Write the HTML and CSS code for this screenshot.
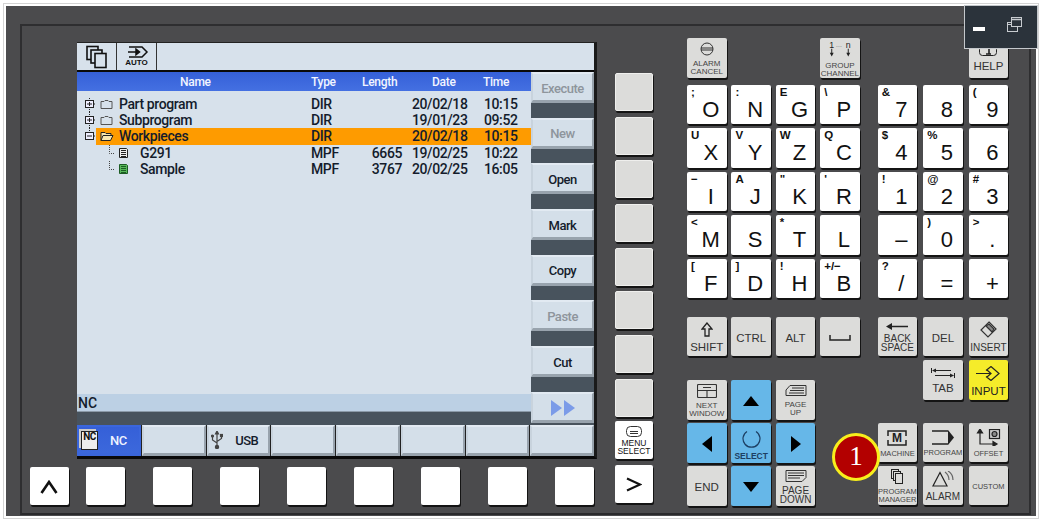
FILE: index.html
```html
<!DOCTYPE html>
<html lang="en">
<head>
    <meta charset="UTF-8">
    <title>Operator panel</title>
    <link rel="stylesheet" href="styles.css">
</head>
<body>
<div class="device">
<div class="bezel">
<div class="inner">

    <!-- Screen and the keys under it -->
    <div class="left-col">
        <div class="screen">
            <div class="top-bar">
                <div class="top-tab">
                    <svg width="24" height="24" viewBox="0 0 24 24" fill="#d7e1eb" stroke="#111" stroke-width="1.6"><rect x="2" y="1.5" width="11" height="13"/><rect x="6" y="5" width="11" height="13"/><rect x="10" y="8.5" width="11" height="14"/></svg>
                </div>
                <div class="top-tab auto-tab">
                    <svg width="24" height="12" viewBox="0 0 24 12" fill="none" stroke="#111" stroke-width="1.5"><path d="M4 1h13l5 5-5 5H4M3 6h11"/><path d="M11 3.2L14.5 6 11 8.800z" fill="#111"/></svg>
                    <span>AUTO</span>
                </div>
            </div>
            <div class="workarea">
                <div class="browser">
                    <div class="list-head">
                        <span class="col-name head-name">Name</span>
                        <span class="col-type">Type</span>
                        <span class="head-length">Length</span>
                        <span class="head-date">Date</span>
                        <span class="head-time">Time</span>
                    </div>
                    <div class="list">
                        <div class="row">
                            <svg class="tree" width="19" height="16" viewBox="0 0 19 16" fill="none" stroke="#222"><path d="M12.500 2v3M12.500 11v5M17 8h2" stroke-dasharray="1 1"/><rect x="8.500" y="4.500" width="8" height="7" fill="#eef"/><path d="M10 8h5M12.500 6v4"/></svg>
                            <div class="cells">
                                <span class="col-name"><svg class="folder" width="13" height="11" viewBox="0 0 13 11" fill="#d7e1eb" stroke="#555"><path d="M1 2.500h3l1-1h3l1 1h3v7H1z"/></svg>Part program</span>
                                <span class="col-type">DIR</span><span class="col-length"></span>
                                <span class="col-date">20/02/18</span><span class="col-time">10:15</span>
                            </div>
                        </div>
                        <div class="row">
                            <svg class="tree" width="19" height="16" viewBox="0 0 19 16" fill="none" stroke="#222"><path d="M12.500 0v5M12.500 11v5M17 8h2" stroke-dasharray="1 1"/><rect x="8.500" y="4.500" width="8" height="7" fill="#eef"/><path d="M10 8h5M12.500 6v4"/></svg>
                            <div class="cells">
                                <span class="col-name"><svg class="folder" width="13" height="11" viewBox="0 0 13 11" fill="#d7e1eb" stroke="#555"><path d="M1 2.500h3l1-1h3l1 1h3v7H1z"/></svg>Subprogram</span>
                                <span class="col-type">DIR</span><span class="col-length"></span>
                                <span class="col-date">19/01/23</span><span class="col-time">09:52</span>
                            </div>
                        </div>
                        <div class="row">
                            <svg class="tree" width="19" height="16" viewBox="0 0 19 16" fill="none" stroke="#222"><path d="M12.500 0v5M17 8h2" stroke-dasharray="1 1"/><rect x="8.500" y="4.500" width="8" height="7" fill="#eef"/><path d="M10 8h5"/></svg>
                            <div class="cells selected">
                                <span class="col-name"><svg class="folder open" width="14" height="11" viewBox="0 0 14 11" fill="#f7e7b0" stroke="#222"><path d="M1 9.500v-8h4l1 1h5v2"/><path d="M1 9.500l2-5h10l-2.500 5z"/></svg>Workpieces</span>
                                <span class="col-type">DIR</span><span class="col-length"></span>
                                <span class="col-date">20/02/18</span><span class="col-time">10:15</span>
                            </div>
                        </div>
                        <div class="row">
                            <svg class="tree" width="19" height="16" viewBox="0 0 19 16"></svg>
                            <div class="cells">
                                <span class="col-name sub-item"><svg class="doc" width="22" height="16" viewBox="0 0 22 16" fill="none" stroke="#222"><path d="M0.500 0v8.500H5" stroke="#444" stroke-dasharray="1 1"/><path d="M10.500 3.500h7l1 1v8h-8z" fill="#eee"/><path d="M12 5.500h5M12 7.500h5M12 9.500h5M12 11.500h5"/></svg>G291</span>
                                <span class="col-type">MPF</span><span class="col-length">6665</span>
                                <span class="col-date">19/02/25</span><span class="col-time">10:22</span>
                            </div>
                        </div>
                        <div class="row">
                            <svg class="tree" width="19" height="16" viewBox="0 0 19 16"></svg>
                            <div class="cells">
                                <span class="col-name sub-item"><svg class="doc" width="22" height="16" viewBox="0 0 22 16" fill="none" stroke="#1c5c24"><path d="M0.500 0v8.500H5" stroke="#444" stroke-dasharray="1 1"/><path d="M10.500 3.500h7l1 1v8h-8z" fill="#58b85a"/><path d="M12 5.500h5M12 7.500h5M12 9.500h5M12 11.500h5"/></svg>Sample</span>
                                <span class="col-type">MPF</span><span class="col-length">3767</span>
                                <span class="col-date">20/02/25</span><span class="col-time">16:05</span>
                            </div>
                        </div>
                    </div>
                    <div class="status">NC</div>
                    <div class="status-gap"></div>
                </div>
                <div class="softkeys">
                    <div class="softkey off">Execute</div>
                    <div class="softkey off">New</div>
                    <div class="softkey">Open</div>
                    <div class="softkey">Mark</div>
                    <div class="softkey">Copy</div>
                    <div class="softkey off">Paste</div>
                    <div class="softkey">Cut</div>
                    <div class="softkey"><svg width="26" height="16" viewBox="0 0 26 16" fill="#7b9be8"><path d="M1 0l11 8-11 8zM14 0l11 8-11 8z"/></svg></div>
                </div>
            </div>
            <div class="h-softkeys">
                <div class="softkey h-key active">
                    <span class="nc-icon">NC</span>
                    <span class="h-label">NC</span>
                </div>
                <div class="softkey h-key"></div>
                <div class="softkey h-key usb-key">
                    <svg width="12" height="18" viewBox="0 0 12 18" fill="none" stroke="#444" stroke-width="1.200"><path d="M6 1v16M1.500 6v3l4.500 3M10.500 5v2.500L6 10.500"/><path d="M6 0L4.500 3h3z" fill="#444"/><circle cx="6" cy="16" r="1.600" fill="#444"/><rect x="9.500" y="3.500" width="2" height="2" fill="#444"/><circle cx="1.500" cy="5" r="1" fill="#444"/></svg>
                    <span class="h-label">USB</span>
                </div>
                <div class="softkey h-key"></div>
                <div class="softkey h-key"></div>
                <div class="softkey h-key"></div>
                <div class="softkey h-key"></div>
                <div class="softkey h-key"></div>
            </div>
        </div>
        <div class="bottom-keys">
            <div class="key white-key fn-key">
                <svg width="18" height="14" viewBox="0 0 18 14" fill="none" stroke="#111" stroke-width="2.600"><path d="M1.500 13L9 2l7.500 11"/></svg>
            </div>
            <div class="key white-key"></div>
            <div class="key white-key"></div>
            <div class="key white-key"></div>
            <div class="key white-key"></div>
            <div class="key white-key"></div>
            <div class="key white-key"></div>
            <div class="key white-key"></div>
            <div class="key white-key"></div>
        </div>
    </div>

    <!-- Vertical keys next to the screen -->
    <div class="side-col">
        <div class="side-stack">
            <div class="key gray-key"></div>
            <div class="key gray-key"></div>
            <div class="key gray-key"></div>
            <div class="key gray-key"></div>
            <div class="key gray-key"></div>
            <div class="key gray-key"></div>
            <div class="key gray-key"></div>
            <div class="key gray-key"></div>
        </div>
        <div class="key white-key fn-key menu-key">
            <svg width="16" height="11" viewBox="0 0 16 11" fill="none" stroke="#333"><rect x="0.500" y="0.500" width="15" height="10" rx="4"/><path d="M4 5.500h8M4 7.500h8"/></svg>
            <span class="tiny menu-label">MENU<br>SELECT</span>
        </div>
        <div class="key white-key fn-key more-key">
            <svg width="16" height="15" viewBox="0 0 16 15" fill="none" stroke="#111" stroke-width="2.200"><path d="M1 1.500l13 6-13 6"/></svg>
        </div>
    </div>

    <!-- Letter keys and cursor block -->
    <div class="alpha-col">
        <div class="key-grid four">
            <div class="key light-key fn-key">
                <svg width="14" height="14" viewBox="0 0 14 14" fill="none" stroke="#333"><circle cx="7" cy="7" r="6"/><path d="M1 6h12M1 8h12"/></svg>
                <span class="tiny">ALARM<br>CANCEL</span>
            </div>
            <div></div><div></div>
            <div class="key light-key fn-key">
                <svg width="24" height="18" viewBox="0 0 24 18" fill="#222" font-family="Liberation Sans" font-size="9"><text x="1" y="8">1</text><text x="8" y="7" fill="#777" font-size="7">...</text><text x="18" y="8">n</text><path d="M3.500 9v5M20.500 9v5" stroke="#222"/><path d="M1.500 13h4l-2 4zM18.500 13h4l-2 4z"/></svg>
                <span class="tiny">GROUP<br>CHANNEL</span>
            </div>
        </div>
        <div class="key-grid four letters">
            <div class="key white-key"><span class="sub">;</span><span class="cap">O</span></div>
            <div class="key white-key"><span class="sub">:</span><span class="cap">N</span></div>
            <div class="key white-key"><span class="sub">E</span><span class="cap">G</span></div>
            <div class="key white-key"><span class="sub">\</span><span class="cap">P</span></div>
            <div class="key white-key"><span class="sub">U</span><span class="cap">X</span></div>
            <div class="key white-key"><span class="sub">V</span><span class="cap">Y</span></div>
            <div class="key white-key"><span class="sub">W</span><span class="cap">Z</span></div>
            <div class="key white-key"><span class="sub">Q</span><span class="cap">C</span></div>
            <div class="key white-key"><span class="sub">&#8722;</span><span class="cap">I</span></div>
            <div class="key white-key"><span class="sub">A</span><span class="cap">J</span></div>
            <div class="key white-key"><span class="sub">"</span><span class="cap">K</span></div>
            <div class="key white-key"><span class="sub">'</span><span class="cap">R</span></div>
            <div class="key white-key"><span class="sub">&lt;</span><span class="cap">M</span></div>
            <div class="key white-key"><span class="sub"></span><span class="cap">S</span></div>
            <div class="key white-key"><span class="sub">*</span><span class="cap">T</span></div>
            <div class="key white-key"><span class="sub"></span><span class="cap">L</span></div>
            <div class="key white-key"><span class="sub">[</span><span class="cap">F</span></div>
            <div class="key white-key"><span class="sub">]</span><span class="cap">D</span></div>
            <div class="key white-key"><span class="sub">!</span><span class="cap">H</span></div>
            <div class="key white-key"><span class="sub">+/&#8722;</span><span class="cap">B</span></div>
        </div>
        <div class="key-grid four mod-row">
            <div class="key light-key fn-key">
                <svg width="12" height="15" viewBox="0 0 12 15" fill="none" stroke="#222" stroke-width="1.300"><path d="M6 1L1 7h3v7h4V7h3z"/></svg>
                <span class="label">SHIFT</span>
            </div>
            <div class="key light-key fn-key"><span class="label">CTRL</span></div>
            <div class="key light-key fn-key"><span class="label">ALT</span></div>
            <div class="key light-key fn-key">
                <svg width="22" height="6" viewBox="0 0 22 6" fill="none" stroke="#222" stroke-width="1.500"><path d="M1 0v5h20V0"/></svg>
            </div>
        </div>
        <div class="key-grid four cursor-block">
            <div class="key light-key fn-key">
                <svg width="20" height="14" viewBox="0 0 20 14" fill="none" stroke="#333" stroke-width="1.100"><rect x="0.500" y="0.500" width="19" height="13" rx="1"/><path d="M0.500 6.500h19M10 6.500v7M6 3.500h8" /></svg>
                <span class="tiny">NEXT<br>WINDOW</span>
            </div>
            <div class="key blue-key fn-key"><svg width="16" height="10" viewBox="0 0 16 10"><path d="M8 0l8 10H0z"/></svg></div>
            <div class="key light-key fn-key">
                <svg width="22" height="12" viewBox="0 0 22 12" fill="none" stroke="#333"><path d="M5 .5h16v10H1V5z"/><path d="M7 3h12M5 5.500h14M4 8h15"/></svg>
                <span class="tiny">PAGE<br>UP</span>
            </div>
            <div></div>
            <div class="key blue-key fn-key"><svg width="10" height="16" viewBox="0 0 10 16"><path d="M0 8l10-8v16z"/></svg></div>
            <div class="key blue-key fn-key">
                <svg width="19" height="19" viewBox="0 0 19 19" fill="none" stroke="#1d3f63" stroke-width="1.200"><path d="M5 2.500a8.500 8.500 0 1 0 9 0"/></svg>
                <span class="tiny select-label">SELECT</span>
            </div>
            <div class="key blue-key fn-key"><svg width="10" height="16" viewBox="0 0 10 16"><path d="M10 8L0 0v16z"/></svg></div>
            <div></div>
            <div class="key light-key fn-key"><span class="label">END</span></div>
            <div class="key blue-key fn-key"><svg width="16" height="10" viewBox="0 0 16 10"><path d="M8 10L0 0h16z"/></svg></div>
            <div class="key light-key fn-key">
                <svg width="22" height="12" viewBox="0 0 22 12" fill="none" stroke="#333"><path d="M1 .5h20v7l-4 4H1z"/><path d="M3 3h16M3 5.500h16M3 8h12"/></svg>
                <span class="small">PAGE<br>DOWN</span>
            </div>
        </div>
    </div>

    <!-- Numeric keys and area keys -->
    <div class="num-col">
        <div class="key-grid three">
            <div></div><div></div>
            <div class="key light-key fn-key help-key">
                <svg width="18" height="10" viewBox="0 0 18 10" fill="none" stroke="#222"><rect x="0.500" y="0.500" width="17" height="9" rx="3"/><path d="M7 2h3v6M7 8h5" stroke-width="1.600"/></svg>
                <span class="label">HELP</span>
            </div>
        </div>
        <div class="key-grid three letters">
            <div class="key white-key"><span class="sub">&amp;</span><span class="cap">7</span></div>
            <div class="key white-key"><span class="sub"></span><span class="cap">8</span></div>
            <div class="key white-key"><span class="sub">(</span><span class="cap">9</span></div>
            <div class="key white-key"><span class="sub">$</span><span class="cap">4</span></div>
            <div class="key white-key"><span class="sub">%</span><span class="cap">5</span></div>
            <div class="key white-key"><span class="sub"></span><span class="cap">6</span></div>
            <div class="key white-key"><span class="sub">!</span><span class="cap">1</span></div>
            <div class="key white-key"><span class="sub">@</span><span class="cap">2</span></div>
            <div class="key white-key"><span class="sub">#</span><span class="cap">3</span></div>
            <div class="key white-key"><span class="sub"></span><span class="cap">&#8211;</span></div>
            <div class="key white-key"><span class="sub">)</span><span class="cap">0</span></div>
            <div class="key white-key"><span class="sub">&gt;</span><span class="cap">.</span></div>
            <div class="key white-key"><span class="sub">?</span><span class="cap">/</span></div>
            <div class="key white-key"><span class="sub"></span><span class="cap">=</span></div>
            <div class="key white-key"><span class="sub"></span><span class="cap">+</span></div>
        </div>
        <div class="key-grid three mod-row">
            <div class="key light-key fn-key">
                <svg width="22" height="7" viewBox="0 0 22 7"><path d="M0 3.500L6 0v2.800h16v1.400H6V7z" fill="#222"/></svg>
                <span class="small">BACK<br>SPACE</span>
            </div>
            <div class="key light-key fn-key"><span class="label">DEL</span></div>
            <div class="key light-key fn-key">
                <svg width="17" height="17" viewBox="0 0 17 17" fill="none" stroke="#333" stroke-width="1.200"><path d="M9 1l7 7-8 8-7-7z"/><path d="M6 5l6 6 2-3-5-5z" fill="#888"/></svg>
                <span class="label smaller">INSERT</span>
            </div>
            <div></div>
            <div class="key light-key fn-key">
                <svg width="24" height="10" viewBox="0 0 24 10" fill="#222"><path d="M0 0h1v5H0zM1 2.500L5 .5v4zM5 2h15v1H5zM23 5h1v5h-1zM23 7.500L19 5.500v4zM4 7h15v1H4z"/></svg>
                <span class="label">TAB</span>
            </div>
            <div class="key yellow-key fn-key">
                <svg width="24" height="15" viewBox="0 0 24 15" fill="none" stroke="#222" stroke-width="1.200"><path d="M0 7.500h15M11 4l4 3.500-4 3.500M10 4.500L15 .5l8 7-8 7-5-4"/></svg>
                <span class="label">INPUT</span>
            </div>
        </div>
        <div class="key-grid three area-keys">
            <div class="key light-key fn-key">
                <svg width="20" height="16" viewBox="0 0 20 16" fill="none" stroke="#222" stroke-width="1.500" font-family="Liberation Sans"><path d="M1 6V1h18v5M1 10v5h18v-5"/><text x="10" y="12" text-anchor="middle" font-size="12" font-weight="700" fill="#222" stroke="none">M</text></svg>
                <span class="tiny area-label">MACHINE</span>
            </div>
            <div class="key light-key fn-key">
                <svg width="24" height="15" viewBox="0 0 24 15" fill="none" stroke="#222" stroke-width="1.500"><path d="M1 1h16M1 14h16"/><path d="M17 0l6 7.500-6 7.500z" fill="#222" stroke="none"/></svg>
                <span class="tiny area-label">PROGRAM</span>
            </div>
            <div class="key light-key fn-key">
                <svg width="26" height="17" viewBox="0 0 26 17" fill="none" stroke="#222" stroke-width="1.200"><path d="M5 3v12h13"/><path d="M5 0l-2.500 4h5zM22 15l-4-2.500v5z" fill="#222"/><rect x="14.500" y="0.500" width="10" height="9" fill="#ccc"/><circle cx="19.500" cy="5" r="2.500" fill="#888"/></svg>
                <span class="tiny area-label">OFFSET</span>
            </div>
            <div class="key light-key fn-key">
                <svg width="14" height="15" viewBox="0 0 14 15" fill="none" stroke="#222"><rect x="1.500" y="0.500" width="7" height="9"/><rect x="3.500" y="2.500" width="7" height="9" fill="#dcdcda"/><rect x="5.500" y="4.500" width="7" height="10" fill="#dcdcda"/></svg>
                <span class="tiny area-label">PROGRAM<br>MANAGER</span>
            </div>
            <div class="key light-key fn-key">
                <svg width="22" height="16" viewBox="0 0 22 16" fill="none" stroke="#222" stroke-width="1.200"><path d="M8 1.500L15 15H1z"/><path d="M13 1q4 3 4 8M16 0q5 3 5 9" stroke="#666"/></svg>
                <span class="label smaller">ALARM</span>
            </div>
            <div class="key light-key fn-key"><span class="tiny area-label">CUSTOM</span></div>
        </div>
    </div>

</div>
</div>

<!-- Window controls over the panel corner -->
<div class="win-controls">
    <span class="win-min"></span>
    <svg width="15" height="15" viewBox="0 0 15 15" fill="#2b333b" stroke="#c8ccd0"><rect x="0.500" y="5.500" width="10" height="9"/><path d="M.5 7.500h10" /><rect x="4.500" y="0.500" width="10" height="9"/><path d="M4.500 2.500h10" stroke-width="1.500"/></svg>
</div>

<!-- Callout marker -->
<div class="badge">1</div>
</div>
</body>
</html>
```

FILE: styles.css
```css
/* General Styling */
* {
    box-sizing: border-box;
    margin: 0;
    padding: 0;
}

body {
    background: #fff;
    font-family: "Liberation Sans", Arial, sans-serif;
    overflow: hidden;
}

.device {
    position: relative;
    width: 1036px;
    height: 516px;
    margin: 3px 0 0 3px;
    padding: 2px;
    border: 1px solid #d4d4d4;
}

.bezel {
    height: 100%;
    padding: 18px 5px 1px 14px;
    background: #4b4b4d;
}

.inner {
    display: flex;
    height: 100%;
    border: 2px solid #2e2e30;
    border-bottom-color: #2a2a2c;
}

/* Left column: screen + key row */
.left-col {
    width: 575px;
    padding: 16px 0 0 8px;
}

.screen {
    width: 520px;
    height: 417px;
    margin-left: 47px;
    background: #d7e1eb;
    border-top: 1px solid #222;
    border-right: 3px solid #1a1a1a;
    border-bottom: 3px solid #0a0a0a;
}

.top-bar {
    display: flex;
    height: 29px;
    border-bottom: 2px solid #0a0a0a;
}

.top-tab {
    display: flex;
    flex-direction: column;
    align-items: center;
    justify-content: center;
    width: 40px;
    border-right: 1px solid #333;
}

.auto-tab span {
    font-size: 8px;
    font-weight: 700;
    line-height: 9px;
    color: #111;
}

.workarea {
    display: flex;
    height: 353px;
}

.browser {
    display: flex;
    flex-direction: column;
    width: 454px;
}

.list-head,
.cells {
    display: grid;
    grid-template-columns: 215px 51px 40px 82px 47px;
    align-items: center;
}

.list-head {
    height: 19px;
    padding-left: 19px;
    background: linear-gradient(#3560d8, #4470e2);
    color: #f2f5ff;
    font-family: Roboto, sans-serif;
    font-size: 12px;
    font-weight: 500;
    letter-spacing: -0.3px;
}

.head-name {
    padding-left: 84px;
}

.head-length {
    white-space: nowrap;
}

.head-date {
    padding-left: 30px;
}

.head-time {
    margin-left: -1px;
}

.list {
    flex: 1;
    padding-top: 5px;
    font-family: Roboto, sans-serif;
    font-size: 14px;
    font-weight: 500;
    letter-spacing: -0.4px;
    color: #141c2c;
}

.row {
    display: flex;
    height: 16.200px;
}

.tree {
    flex: none;
}

.cells {
    flex: 1;
    height: 16.200px;
    line-height: 16px;
}

.selected {
    background: #fe9b00;
}

.col-name {
    display: flex;
    align-items: center;
}

.col-length {
    text-align: right;
}

.col-date {
    padding-left: 10px;
}

.folder {
    margin: 0 6px 0 4px;
}

.folder.open {
    margin-right: 5px;
}

.sub-item {
    padding-left: 13px;
}

.doc {
    margin-right: 9px;
}

.status {
    height: 18px;
    padding-left: 1px;
    background: #bcd0e4;
    border-bottom: 1px solid #8b9aa8;
    font-family: Roboto, sans-serif;
    font-size: 14px;
    font-weight: 500;
    line-height: 18px;
    color: #141c2c;
}

.status-gap {
    height: 13px;
    background: #48535d;
}

/* Softkeys */
.softkeys {
    display: flex;
    flex-direction: column;
    gap: 14.700px;
    width: 63px;
    background: #48535d;
}

.softkey {
    display: flex;
    align-items: center;
    justify-content: center;
    height: 31px;
    padding-top: 2px;
    background: #d4dfe9;
    border-top: 2px solid #e2eaf2;
    border-left: 2px solid #c8d3dd;
    border-right: 2px solid #98a3ad;
    border-bottom: 3px solid #98a3ad;
    font-family: Roboto, sans-serif;
    font-size: 13px;
    font-weight: 500;
    letter-spacing: -0.5px;
    color: #141c2c;
}

.off {
    color: #8e959c;
}

.h-softkeys {
    display: flex;
    gap: 1px;
    height: 31px;
    background: #222;
}

.h-key {
    flex: 1;
    justify-content: space-between;
    padding: 0 2px 0 2px;
}

.h-label {
    font-size: 13px;
    margin-right: 8px;
}

.active {
    background: linear-gradient(#3560d8, #3c68dc);
    border-color: #3a66dc;
    color: #eef3ff;
}

.active .h-label {
    margin-right: 10px;
}

.nc-icon {
    width: 17px;
    height: 19px;
    background: #eee;
    border: 1px solid #222;
    box-shadow: -2px -2px 0 #ccc;
    font-size: 10px;
    font-weight: 700;
    line-height: 10px;
    color: #111;
    text-align: center;
}

/* Keys */
.key {
    height: 39.500px;
    width: 39.500px;
    border-radius: 2px;
    box-shadow: 1px 2px 0 #141414;
    color: #111;
}

.white-key {
    background: #fff;
}

.gray-key {
    background: #dcdcda;
    border: 1px solid #efefed;
    height: 38px;
    width: 38px;
}

.light-key {
    background: #dcdcda;
    color: #333;
}

.blue-key {
    background: #66b7e8;
}

.yellow-key {
    background: #f5ec2a;
    color: #222;
}

.fn-key {
    display: flex;
    flex-direction: column;
    align-items: center;
    justify-content: center;
    gap: 4px;
    padding-top: 2px;
    text-align: center;
}

.tiny {
    font-size: 8px;
    line-height: 8px;
    color: #444;
}

.area-label {
    font-size: 7.500px;
}

.menu-key .tiny,
.select-label {
    font-size: 8.500px;
}

.menu-key .tiny {
    color: #111;
}

.select-label {
    color: #1d3f63;
    font-weight: 700;
}

.label {
    font-size: 11.500px;
    line-height: 12px;
}

.smaller {
    font-size: 10px;
}

.small {
    font-size: 10px;
    line-height: 9.500px;
}

.sub {
    display: block;
    height: 12px;
    padding: 2px 0 0 4px;
    font-size: 11.500px;
    font-weight: 700;
    line-height: 11px;
}

.cap {
    display: block;
    height: 22px;
    margin-top: 2px;
    padding-left: 8px;
    font-size: 22px;
    line-height: 22px;
    text-align: center;
}

.bottom-keys {
    display: flex;
    gap: 28.500px;
    margin-top: 8px;
}

.bottom-keys .key {
    width: 38.500px;
    height: 38px;
}

.bottom-keys .key:first-child {
    margin-right: -11px;
}

.more-key {
    width: 38px;
    height: 38px;
    margin-top: 6px;
}

/* Column of keys beside the screen */
.side-col {
    width: 38px;
    margin-left: 18px;
    padding-top: 47px;
}

.side-stack {
    display: flex;
    flex-direction: column;
    gap: 5.700px;
}

.menu-key {
    width: 38px;
    height: 38px;
    margin-top: 4px;
    gap: 2px;
}

/* Keypad */
.alpha-col {
    margin-left: 34px;
    padding-top: 12px;
}

.num-col {
    margin-left: 18px;
    padding-top: 12px;
}

.key-grid {
    display: grid;
    grid-auto-rows: 39.500px;
    row-gap: 4.100px;
}

.four {
    grid-template-columns: repeat(4, 39.500px);
    column-gap: 4.900px;
}

.three {
    grid-template-columns: repeat(3, 39.500px);
    column-gap: 6px;
}

.letters {
    margin-top: 7px;
}

.mod-row {
    margin-top: 18.500px;
}

.cursor-block {
    margin-top: 24px;
    row-gap: 3.500px;
}

.area-keys {
    margin-top: 23px;
    row-gap: 3.500px;
}

/* Overlays */
.win-controls {
    position: absolute;
    top: 1px;
    left: 960px;
    display: flex;
    align-items: center;
    justify-content: space-between;
    width: 74px;
    height: 44px;
    padding: 0 15px 6px 8px;
    background: #2b333b;
    border: 1px solid #c4c8cc;
}

.win-min {
    display: block;
    width: 12px;
    height: 4px;
    margin-top: 10px;
    background: #fff;
}

.badge {
    position: absolute;
    top: 429px;
    left: 828px;
    width: 48px;
    height: 48px;
    border: 3px solid #f8ee1c;
    border-radius: 50%;
    background: #b30000;
    color: #fff;
    font-family: "Liberation Serif", serif;
    font-size: 27px;
    line-height: 41px;
    text-align: center;
}
```
